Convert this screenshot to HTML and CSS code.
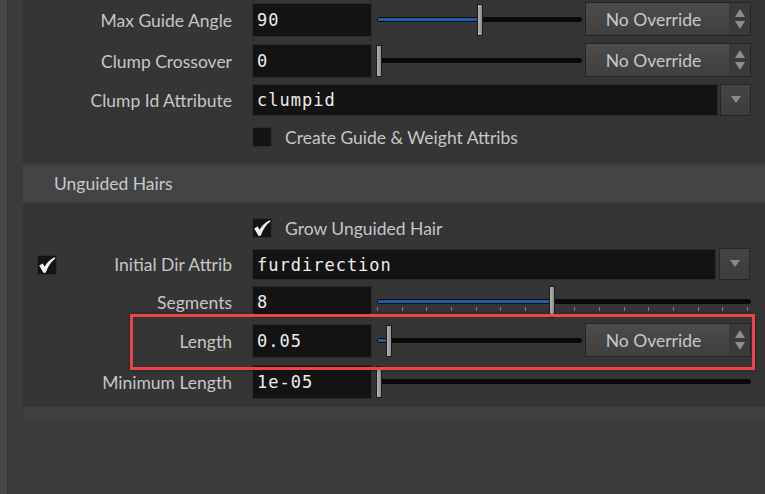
FILE: index.html
```html
<!DOCTYPE html>
<html>
<head>
<meta charset="utf-8">
<link rel="stylesheet" href="styles.css">
</head>
<body>
<div class="strip"></div>
<div class="main">
  <div class="panel p1">
    <div class="row ra">
      <div class="lab"><span class="lt">Max Guide Angle</span></div>
      <div class="field">90</div>
      <div class="slider short">
        <div class="track"></div>
        <div class="fill" style="width:100px"></div>
        <div class="handle" style="left:101px"></div>
      </div>
      <div class="dd"><span class="ddt">No Override</span><span class="dda"><svg width="12" height="22" viewBox="0 0 12 22"><polygon points="6,1 11,9 1,9" fill="#8e8e8e"/><polygon points="1,13 11,13 6,21" fill="#8e8e8e"/></svg></span></div>
    </div>
    <div class="row rb">
      <div class="lab"><span class="lt">Clump Crossover</span></div>
      <div class="field">0</div>
      <div class="slider short">
        <div class="track"></div>
        <div class="handle" style="left:0px"></div>
      </div>
      <div class="dd"><span class="ddt">No Override</span><span class="dda"><svg width="12" height="22" viewBox="0 0 12 22"><polygon points="6,1 11,9 1,9" fill="#8e8e8e"/><polygon points="1,13 11,13 6,21" fill="#8e8e8e"/></svg></span></div>
    </div>
    <div class="row rc">
      <div class="lab"><span class="lt">Clump Id Attribute</span></div>
      <div class="field wide">clumpid</div>
      <div class="btn"><svg width="10" height="8" viewBox="0 0 10 8"><polygon points="0,0 10,0 5,7" fill="#8a8a8a"/></svg></div>
    </div>
    <div class="row rd">
      <div class="lab"></div>
      <div class="cb"></div>
      <span class="cbt">Create Guide &amp; Weight Attribs</span>
    </div>
  </div>
  <div class="header">Unguided Hairs</div>
  <div class="panel p2">
    <div class="row re">
      <div class="lab"></div>
      <div class="cb"><svg width="20" height="20" viewBox="0 0 20 20"><path d="M2.2 10.6 L5.8 8.4 L7.6 11.8 C10 7.4 13 4.4 17.8 2.2 L18.4 3.6 C14.2 6.6 11.4 11 8.8 17.8 L6.4 17.8 Z" fill="#f2f2f2"/></svg></div>
      <span class="cbt">Grow Unguided Hair</span>
    </div>
    <div class="row rf">
      <div class="lab"><div class="cb lcb"><svg width="20" height="20" viewBox="0 0 20 20"><path d="M2.2 10.6 L5.8 8.4 L7.6 11.8 C10 7.4 13 4.4 17.8 2.2 L18.4 3.6 C14.2 6.6 11.4 11 8.8 17.8 L6.4 17.8 Z" fill="#f2f2f2"/></svg></div><span class="lt">Initial Dir Attrib</span></div>
      <div class="field wide2">furdirection</div>
      <div class="btn b2"><svg width="10" height="8" viewBox="0 0 10 8"><polygon points="0,0 10,0 5,7" fill="#8a8a8a"/></svg></div>
    </div>
    <div class="row rg">
      <div class="lab"><span class="lt">Segments</span></div>
      <div class="field">8</div>
      <div class="slider long">
        <div class="track"></div>
        <div class="fill" style="width:172px"></div>
        <div class="ticks"><i></i><i></i><i></i><i></i><i></i><i></i><i></i><i></i><i></i><i></i><i></i><i></i><i></i><i></i><i></i><i></i></div>
        <div class="handle" style="left:173px"></div>
      </div>
    </div>
    <div class="row rh">
      <div class="lab"><span class="lt">Length</span></div>
      <div class="field">0.05</div>
      <div class="slider short">
        <div class="track"></div>
        <div class="fill" style="width:9px"></div>
        <div class="handle" style="left:10px"></div>
      </div>
      <div class="dd"><span class="ddt">No Override</span><span class="dda"><svg width="12" height="22" viewBox="0 0 12 22"><polygon points="6,1 11,9 1,9" fill="#8e8e8e"/><polygon points="1,13 11,13 6,21" fill="#8e8e8e"/></svg></span></div>
    </div>
    <div class="row ri">
      <div class="lab"><span class="lt">Minimum Length</span></div>
      <div class="field">1e-05</div>
      <div class="slider long">
        <div class="track"></div>
        <div class="handle" style="left:0px"></div>
      </div>
    </div>
  </div>
  <div class="band"></div>
</div>
<div class="redbox"></div>
</body>
</html>
```
FILE: styles.css
```css
html, body {
  margin: 0;
  padding: 0;
}
body {
  width: 765px;
  height: 494px;
  overflow: hidden;
  background: #3b3b3b;
  display: flex;
  font-family: Lato, "Open Sans", sans-serif;
  position: relative;
}
.strip {
  width: 7px;
  background: #464646;
  border-right: 1px solid #333333;
  flex: none;
}
.main {
  margin-left: 15px;
  flex: 1;
  display: flex;
  flex-direction: column;
}
.panel {
  background: #353535;
  display: flex;
  flex-direction: column;
}
.p1 {
  height: 163px;
  padding-top: 2px;
  box-sizing: border-box;
}
.header {
  margin-top: 2px;
  height: 37px;
  line-height: 37px;
  background: #444444;
  color: #c8c8c8;
  font-size: 17.5px;
  padding-left: 31px;
  margin-bottom: 1px;
}
.p2 {
  height: 204px;
  padding-top: 14px;
  box-sizing: border-box;
}
.band {
  height: 13px;
  background: #3f3f3f;
}
.row {
  display: flex;
  align-items: center;
  flex: none;
}
.ra { height: 36px; }
.rb { height: 36px; margin-top: 5px; }
.rc { height: 32px; margin-top: 5px; }
.rd { height: 22px; margin-top: 10px; }
.re { height: 22px; }
.rf { height: 33px; margin-top: 9px; }
.rg { height: 32px; margin-top: 5px; }
.rh { height: 36px; margin-top: 5px; }
.ri { height: 34px; margin-top: 6px; }
.lab {
  width: 209px;
  flex: none;
  display: flex;
  align-items: center;
  height: 100%;
}
.lt {
  margin-left: auto;
  color: #c6c6c6;
  font-size: 17.5px;
}
.field {
  margin-left: 20px;
  width: 120px;
  height: 34px;
  box-sizing: border-box;
  background: #131313;
  border: 1px solid #2a2a2a;
  color: #ededed;
  font-family: "DejaVu Sans Mono", monospace;
  font-size: 17px;
  letter-spacing: 1px;
  padding-left: 4px;
  display: flex;
  align-items: center;
  flex: none;
}
.rc .field, .rg .field { height: 32px; }
.rf .field { height: 31px; }
.wide { width: 466px; }
.wide2 { width: 464px; }
.slider {
  position: relative;
  margin-left: 4px;
  height: 32px;
  flex: none;
}
.short { width: 206px; }
.long { width: 375px; }
.track {
  position: absolute;
  left: 1px;
  right: 0;
  top: 13px;
  height: 5px;
  background: #0a0a0a;
  border-radius: 3px;
}
.fill {
  position: absolute;
  left: 2px;
  top: 14px;
  height: 3px;
  background: #1f5caa;
}
.handle {
  position: absolute;
  top: 0;
  width: 6px;
  height: 32px;
  box-sizing: border-box;
  border: 1px solid #1c1c1c;
  background: linear-gradient(to right, #b4b4b4, #8c8c8c);
}
.ticks {
  position: absolute;
  left: 1px;
  width: 371px;
  top: 21px;
  height: 4px;
  display: flex;
  justify-content: space-between;
}
.ticks i {
  width: 1px;
  height: 4px;
  background: #7a7a7a;
}
.dd {
  margin-left: 3px;
  width: 166px;
  height: 34px;
  box-sizing: border-box;
  border: 1px solid #242424;
  background: linear-gradient(#4c4c4c, #3f3f3f);
  display: flex;
  flex: none;
  align-self: flex-start;
}
.ddt {
  flex: 1;
  text-align: center;
  line-height: 33px;
  color: #c8c8c8;
  font-size: 17.5px;
  padding-right: 8px;
}
.dda {
  width: 21px;
  background: #3a3a3a;
  display: flex;
  align-items: center;
  justify-content: center;
}
.btn {
  margin-left: 2px;
  width: 31px;
  height: 32px;
  box-sizing: border-box;
  border: 1px solid #262626;
  background: linear-gradient(#454545, #3c3c3c);
  display: flex;
  align-items: center;
  justify-content: center;
  flex: none;
}
.b2 { margin-left: 3px; align-self: flex-start; }
.cb {
  margin-left: 20px;
  width: 20px;
  height: 20px;
  box-sizing: border-box;
  background: #141414;
  border: 1px solid #2c2c2c;
  flex: none;
  display: flex;
  align-items: center;
  justify-content: center;
}
.cb svg { flex: none; }
.lcb { margin-left: 14px; }
.cbt {
  margin-left: 13px;
  color: #c6c6c6;
  font-size: 17.5px;
}
.redbox {
  position: absolute;
  left: 130px;
  top: 314px;
  width: 625px;
  height: 56px;
  box-sizing: border-box;
  border: 3px solid #ec4449;
  box-shadow: 0 0 4px rgba(0, 0, 0, 0.35);
}
```
